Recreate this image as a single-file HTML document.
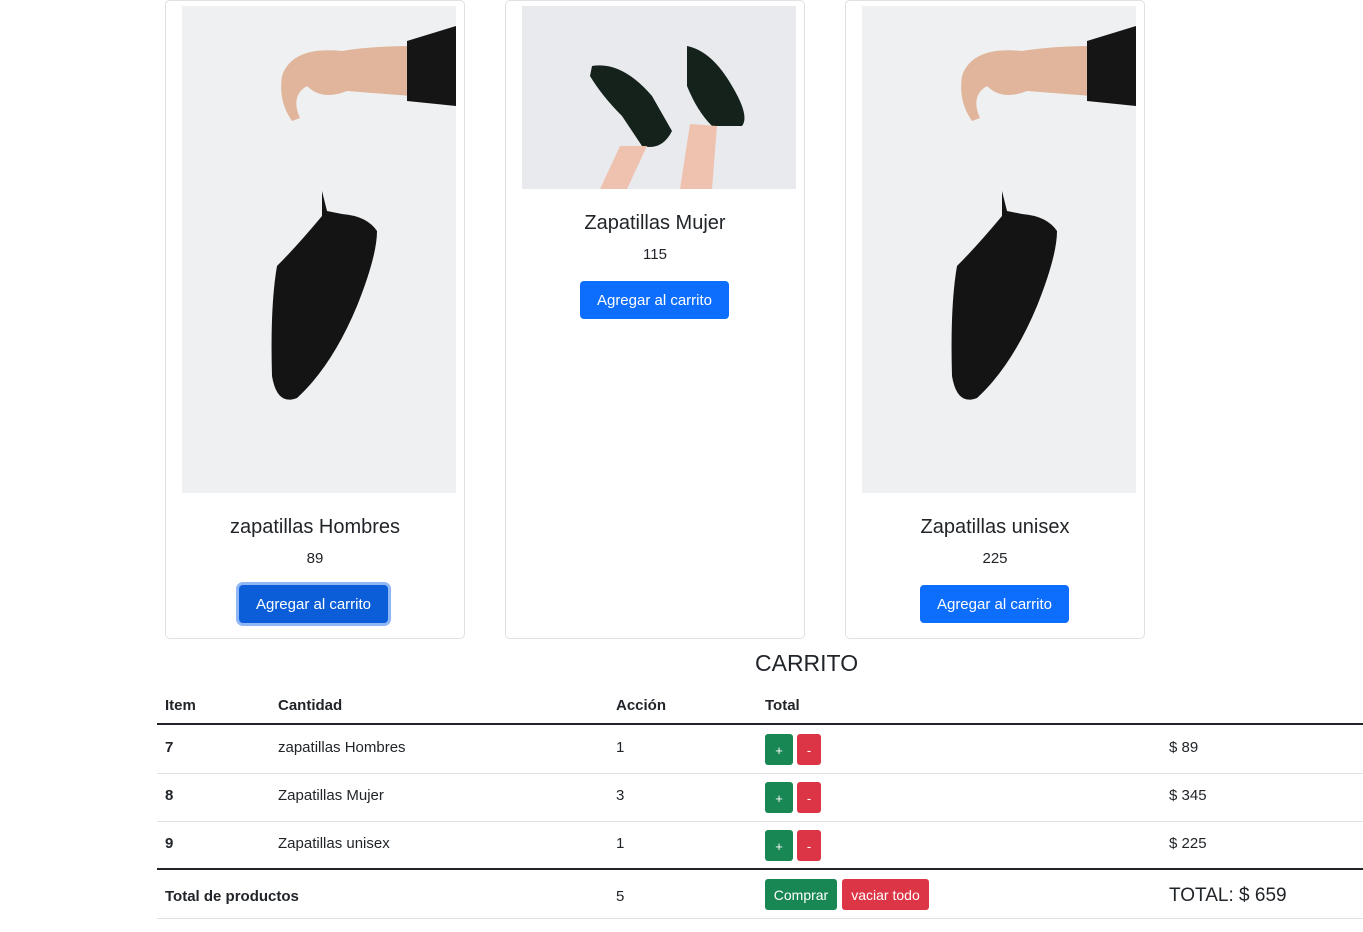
<!DOCTYPE html>
<html><head><meta charset="utf-8"><style>
*{box-sizing:border-box;margin:0;padding:0}
body{width:1363px;height:932px;background:#fff;font-family:"Liberation Sans",sans-serif;color:#212529;position:relative;overflow:hidden}
.card{position:absolute;top:0;width:300px;height:639px;border:1px solid #dfe1e3;border-radius:5px}
.img{position:absolute;left:16px;top:5px;width:274px}
.t{position:absolute;left:0;width:100%;text-align:center;font-size:20px}
.p{position:absolute;left:0;width:100%;text-align:center;font-size:15px}
.btn{position:absolute;background:#0d6efd;color:#fff;font-size:15px;border-radius:4px;text-align:center;line-height:40px;height:38px;width:149px}
.a{position:absolute;font-size:15px}
.b{font-weight:bold}
.line{position:absolute;left:157px;width:1206px}
.sb{position:absolute;color:#fff;font-size:13px;text-align:center;border-radius:3px}
</style></head><body>

<div class="card" style="left:165px">
 <svg class="img" height="487" viewBox="0 0 274 487"><rect width="274" height="487" fill="#eff0f1"/>
 <path d="M274 25 L230 40 Q190 40 160 45 Q110 40 100 70 Q96 95 110 115 L118 112 Q108 90 125 80 Q140 95 165 85 L230 90 L274 95Z" fill="#e0b59b"/>
 <path d="M274 20 L225 35 L225 95 L274 100Z" fill="#151515"/>
 <path d="M140 185 L140 210 Q115 240 95 260 Q88 300 90 370 Q95 400 115 392 Q150 360 175 300 Q195 250 195 225 Q185 210 160 208 L145 205Z" fill="#141414"/>
 </svg>
 <div class="t" style="top:515px">zapatillas Hombres</div>
 <div class="p" style="top:549px">89</div>
 <div class="btn" style="left:73px;top:584px;background:#0b5ed7;box-shadow:0 0 0 3px #8fb6f5">Agregar al carrito</div>
</div>

<div class="card" style="left:505px">
 <svg class="img" height="183" viewBox="0 0 274 183"><rect width="274" height="183" fill="#e9eaee"/>
 <path d="M70 60 Q100 55 130 90 L150 125 Q140 145 120 140 L100 110 Q80 90 68 70Z" fill="#14221b"/>
 <path d="M165 40 Q190 45 210 80 Q228 110 220 120 L190 120 Q175 105 165 80Z" fill="#14221b"/>
 <path d="M98 140 L125 140 L105 183 L78 183Z M168 118 L195 120 L190 183 L158 183Z" fill="#eec2ae"/>
 </svg>
 <div class="t" style="top:211px">Zapatillas Mujer</div>
 <div class="p" style="top:245px">115</div>
 <div class="btn" style="left:74px;top:280px">Agregar al carrito</div>
</div>

<div class="card" style="left:845px">
 <svg class="img" height="487" viewBox="0 0 274 487"><rect width="274" height="487" fill="#eff0f1"/>
 <path d="M274 25 L230 40 Q190 40 160 45 Q110 40 100 70 Q96 95 110 115 L118 112 Q108 90 125 80 Q140 95 165 85 L230 90 L274 95Z" fill="#e0b59b"/>
 <path d="M274 20 L225 35 L225 95 L274 100Z" fill="#151515"/>
 <path d="M140 185 L140 210 Q115 240 95 260 Q88 300 90 370 Q95 400 115 392 Q150 360 175 300 Q195 250 195 225 Q185 210 160 208 L145 205Z" fill="#141414"/>
 </svg>
 <div class="t" style="top:515px">Zapatillas unisex</div>
 <div class="p" style="top:549px">225</div>
 <div class="btn" style="left:74px;top:584px">Agregar al carrito</div>
</div>

<div class="a" style="left:755px;top:650px;font-size:23px">CARRITO</div>

<div class="a b" style="left:165px;top:697px">Item</div>
<div class="a b" style="left:278px;top:697px">Cantidad</div>
<div class="a b" style="left:616px;top:697px">Acción</div>
<div class="a b" style="left:765px;top:697px">Total</div>
<div class="line" style="top:723px;height:2px;background:#212529"></div>

<div class="a b" style="left:165px;top:739px">7</div>
<div class="a" style="left:278px;top:739px">zapatillas Hombres</div>
<div class="a" style="left:616px;top:739px">1</div>
<div class="sb" style="left:765px;top:734px;width:28px;height:31px;line-height:33px;background:#198754">+</div>
<div class="sb" style="left:797px;top:734px;width:24px;height:31px;line-height:33px;background:#dc3545">-</div>
<div class="a" style="left:1169px;top:739px">$ 89</div>
<div class="line" style="top:773px;height:1px;background:#dee2e6"></div>

<div class="a b" style="left:165px;top:787px">8</div>
<div class="a" style="left:278px;top:787px">Zapatillas Mujer</div>
<div class="a" style="left:616px;top:787px">3</div>
<div class="sb" style="left:765px;top:782px;width:28px;height:31px;line-height:33px;background:#198754">+</div>
<div class="sb" style="left:797px;top:782px;width:24px;height:31px;line-height:33px;background:#dc3545">-</div>
<div class="a" style="left:1169px;top:787px">$ 345</div>
<div class="line" style="top:821px;height:1px;background:#dee2e6"></div>

<div class="a b" style="left:165px;top:835px">9</div>
<div class="a" style="left:278px;top:835px">Zapatillas unisex</div>
<div class="a" style="left:616px;top:835px">1</div>
<div class="sb" style="left:765px;top:830px;width:28px;height:31px;line-height:33px;background:#198754">+</div>
<div class="sb" style="left:797px;top:830px;width:24px;height:31px;line-height:33px;background:#dc3545">-</div>
<div class="a" style="left:1169px;top:835px">$ 225</div>
<div class="line" style="top:868px;height:2px;background:#212529"></div>

<div class="a b" style="left:165px;top:888px">Total de productos</div>
<div class="a" style="left:616px;top:888px">5</div>
<div class="sb" style="left:765px;top:879px;width:72px;height:31px;line-height:32px;background:#198754;font-size:14px">Comprar</div>
<div class="sb" style="left:842px;top:879px;width:87px;height:31px;line-height:32px;background:#dc3545;font-size:14px">vaciar todo</div>
<div class="a" style="left:1169px;top:885px;font-size:19px">TOTAL: $ 659</div>
<div class="line" style="top:918px;height:1px;background:#dee2e6"></div>
</body></html>
